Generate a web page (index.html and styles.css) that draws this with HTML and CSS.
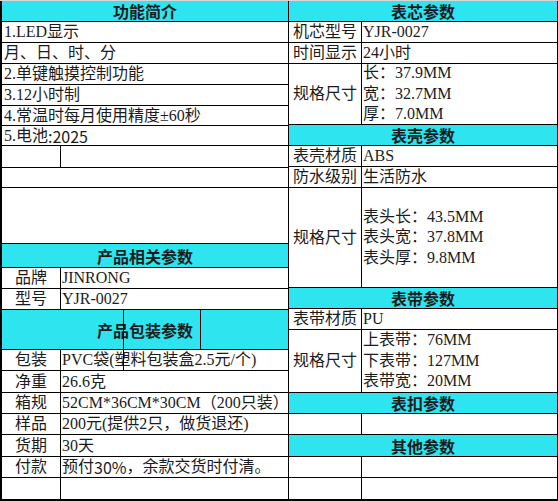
FILE: index.html
```html
<!DOCTYPE html>
<html lang="zh-CN">
<head>
<meta charset="utf-8">
<title>产品参数</title>
<link rel="stylesheet" href="styles.css">
</head>
<body>
<div class="sheet">
  <div class="tbl left">
    <div class="c hd span">功能简介</div>
    <div class="c span">1.LED显示</div>
    <div class="c span">月、日、时、分</div>
    <div class="c span">2.单键触摸控制功能</div>
    <div class="c span">3.12小时制</div>
    <div class="c span">4.常温时每月使用精度±60秒</div>
    <div class="c span">5.电池<span class="sans">:2025</span></div>
    <div class="c"></div><div class="c"></div>
    <div class="c span"></div>
    <div class="c span"></div>
    <div class="c hd span">产品相关参数</div>
    <div class="c lbl">品牌</div><div class="c">JINRONG</div>
    <div class="c lbl">型号</div><div class="c">YJR-0027</div>
    <div class="c hd span pk">产品包装参数<span class="vl vl1"></span><span class="vl vl2"></span></div>
    <div class="c lbl">包装</div><div class="c">PVC袋(塑料包装盒2.5元/个)</div>
    <div class="c lbl">净重</div><div class="c">26.6克</div>
    <div class="c lbl">箱规</div><div class="c">52CM*36CM*30CM（200只装）</div>
    <div class="c lbl">样品</div><div class="c">200元(提供2只，做货退还)</div>
    <div class="c lbl">货期</div><div class="c">30天</div>
    <div class="c lbl">付款</div><div class="c">预付<span class="sans">30%</span>，余款交货时付清。</div>
    <div class="c"></div><div class="c"></div>
  </div>
  <div class="tbl right">
    <div class="c hd span">表芯参数</div>
    <div class="c lbl">机芯型号</div><div class="c">YJR-0027</div>
    <div class="c lbl">时间显示</div><div class="c">24小时</div>
    <div class="c lbl">规格尺寸</div>
    <div class="c multi"><div>长：37.9MM</div><div>宽：32.7MM</div><div>厚：7.0MM</div></div>
    <div class="c hd span">表壳参数</div>
    <div class="c lbl">表壳材质</div><div class="c">ABS</div>
    <div class="c lbl">防水级别</div><div class="c">生活防水</div>
    <div class="c lbl">规格尺寸</div>
    <div class="c multi"><div>表头长：43.5MM</div><div>表头宽：37.8MM</div><div>表头厚：9.8MM</div></div>
    <div class="c hd span">表带参数</div>
    <div class="c lbl">表带材质</div><div class="c">PU</div>
    <div class="c lbl">规格尺寸</div>
    <div class="c multi"><div>上表带：76MM</div><div>下表带：127MM</div><div>表带宽：20MM</div></div>
    <div class="c hd span">表扣参数</div>
    <div class="c"></div><div class="c"></div>
    <div class="c hd span">其他参数</div>
    <div class="c"></div><div class="c"></div>
    <div class="c"></div><div class="c"></div>
  </div>
</div>
</body>
</html>
```
FILE: styles.css
```css
html, body {
  margin: 0;
  padding: 0;
  background: #ffffff;
}

.sheet {
  display: flex;
  width: 558px;
  height: 501px;
  font-family: "Liberation Serif", "Noto Sans CJK SC", serif;
  font-size: 16px;
  color: #1c1c1c;
}

.tbl {
  display: grid;
  gap: 1px;
  background: #000000;
  border-top: 1px solid #d8d8d8;
  padding-bottom: 2px;
  box-sizing: border-box;
  height: 501px;
}

.left {
  width: 288px;
  padding-left: 2px;
  grid-template-columns: 58px 227px;
  grid-template-rows: 20px 20px 20px 20px 20px 19px 19px 21px 19px 55px 23px 20px 20px 39px 20px 21px 20px 20px 21px 20px 21px;
}

.right {
  width: 270px;
  padding-left: 1px;
  padding-right: 1px;
  grid-template-columns: 72px 195px;
  grid-template-rows: 20px 20px 20px 60px 20px 20px 20px 99px 20px 20px 62px 20px 20px 21px 20px 21px;
}

.c {
  background: #ffffff;
  display: flex;
  align-items: center;
  padding-left: 1px;
  line-height: 20px;
  white-space: nowrap;
  overflow: visible;
  min-width: 0;
}

.span {
  grid-column: 1 / -1;
  padding-left: 2px;
}

.hd {
  background: #2de4ef;
  justify-content: center;
  font-family: "Noto Sans CJK SC", sans-serif;
  font-weight: 700;
  padding-left: 0;
}

.lbl {
  justify-content: center;
  padding-left: 0;
}

.sans {
  font-family: "Noto Sans CJK SC", sans-serif;
}

.multi {
  flex-direction: column;
  align-items: flex-start;
  justify-content: center;
  line-height: 20.5px;
}

.pk {
  position: relative;
}

.vl {
  position: absolute;
  width: 1px;
  background: #000000;
  top: 0;
  z-index: 2;
}

.vl1 {
  left: 121px;
  height: 61px;
}

.vl2 {
  left: 198px;
  height: 39px;
}
```
